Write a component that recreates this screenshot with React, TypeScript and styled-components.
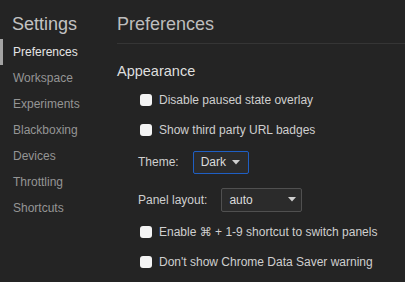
import React from "react";
import styled, { createGlobalStyle } from "styled-components";

const Global = createGlobalStyle`
  html, body { margin: 0; padding: 0; background: #242424; }
  body { font-family: "Liberation Sans", Arial, "DejaVu Sans", sans-serif; }
  * { box-sizing: border-box; }
`;

const Page = styled.div`
  display: flex;
  width: 405px;
  height: 282px;
  background: #242424;
  overflow: hidden;
`;

const Sidebar = styled.nav`
  width: 105px;
  flex: none;
  display: flex;
  flex-direction: column;
`;

const SideTitle = styled.div`
  font-size: 18px;
  line-height: 22px;
  color: #c2c2c2;
  padding: 13px 0 4px 12px;
`;

const SideItem = styled.div<{ $active?: boolean }>`
  height: 26px;
  line-height: 26px;
  font-size: 12px;
  padding-left: 10px;
  border-left: 3px solid ${(p) => (p.$active ? "#a3a3a3" : "transparent")};
  color: ${(p) => (p.$active ? "#e4e4e4" : "#959595")};
`;

const Main = styled.main`
  flex: 1;
  padding-left: 12px;
  display: flex;
  flex-direction: column;
`;

const Header = styled.div`
  font-size: 18px;
  line-height: 22px;
  color: #bdbdbd;
  padding: 13px 0 8px 0;
  border-bottom: 1px solid #353535;
`;

const Section = styled.section`
  padding-top: 18px;
  display: flex;
  flex-direction: column;
`;

const SectionTitle = styled.div`
  font-size: 14.5px;
  line-height: 18px;
  color: #dedede;
  margin-bottom: 5px;
`;

const CheckRow = styled.label`
  display: flex;
  align-items: center;
  height: 30px;
  padding-left: 23px;
  gap: 7px;
  font-size: 12px;
  line-height: 14px;
  color: #cfcfcf;
`;

const Box = styled.span`
  width: 12px;
  height: 12px;
  border-radius: 3px;
  background: #f4f4f4;
  flex: none;
`;

const FieldRow = styled.div<{ $h: number; $mt?: number }>`
  display: flex;
  align-items: center;
  height: ${(p) => p.$h}px;
  margin-top: ${(p) => p.$mt ?? 0}px;
  padding-left: 21px;
  gap: 14px;
  font-size: 12px;
  line-height: 14px;
  color: #cfcfcf;
`;

const Select = styled.div<{ $w: number; $h: number; $focus?: boolean; $padR: number }>`
  display: flex;
  align-items: center;
  justify-content: space-between;
  width: ${(p) => p.$w}px;
  height: ${(p) => p.$h}px;
  padding: 0 ${(p) => p.$padR}px 0 7px;
  border: 1px solid ${(p) => (p.$focus ? "#1f5fc4" : "#505050")};
  border-radius: 2px;
  background: #2b2b2b;
  color: #dcdcdc;
  font-size: 12px;
`;

const Arrow = () => (
  <svg width="8" height="5" viewBox="0 0 8 5">
    <path d="M0 0 L8 0 L4 4.5 Z" fill="#cfcfcf" />
  </svg>
);

const items = ["Preferences", "Workspace", "Experiments", "Blackboxing", "Devices", "Throttling", "Shortcuts"];

export default function App() {
  return (
    <>
      <Global />
      <Page>
        <Sidebar>
          <SideTitle>Settings</SideTitle>
          {items.map((it, i) => (
            <SideItem key={it} $active={i === 0}>
              {it}
            </SideItem>
          ))}
        </Sidebar>
        <Main>
          <Header>Preferences</Header>
          <Section>
            <SectionTitle>Appearance</SectionTitle>
            <CheckRow>
              <Box />
              Disable paused state overlay
            </CheckRow>
            <CheckRow>
              <Box />
              Show third party URL badges
            </CheckRow>
            <FieldRow $h={34}>
              Theme:
              <Select $w={56} $h={23} $focus $padR={8}>
                Dark
                <Arrow />
              </Select>
            </FieldRow>
            <FieldRow $h={35} $mt={3}>
              Panel layout:
              <Select $w={81} $h={24} $padR={5}>
                auto
                <Arrow />
              </Select>
            </FieldRow>
            <CheckRow>
              <Box />
              Enable ⌘ + 1-9 shortcut to switch panels
            </CheckRow>
            <CheckRow>
              <Box />
              Don't show Chrome Data Saver warning
            </CheckRow>
          </Section>
        </Main>
      </Page>
    </>
  );
}
